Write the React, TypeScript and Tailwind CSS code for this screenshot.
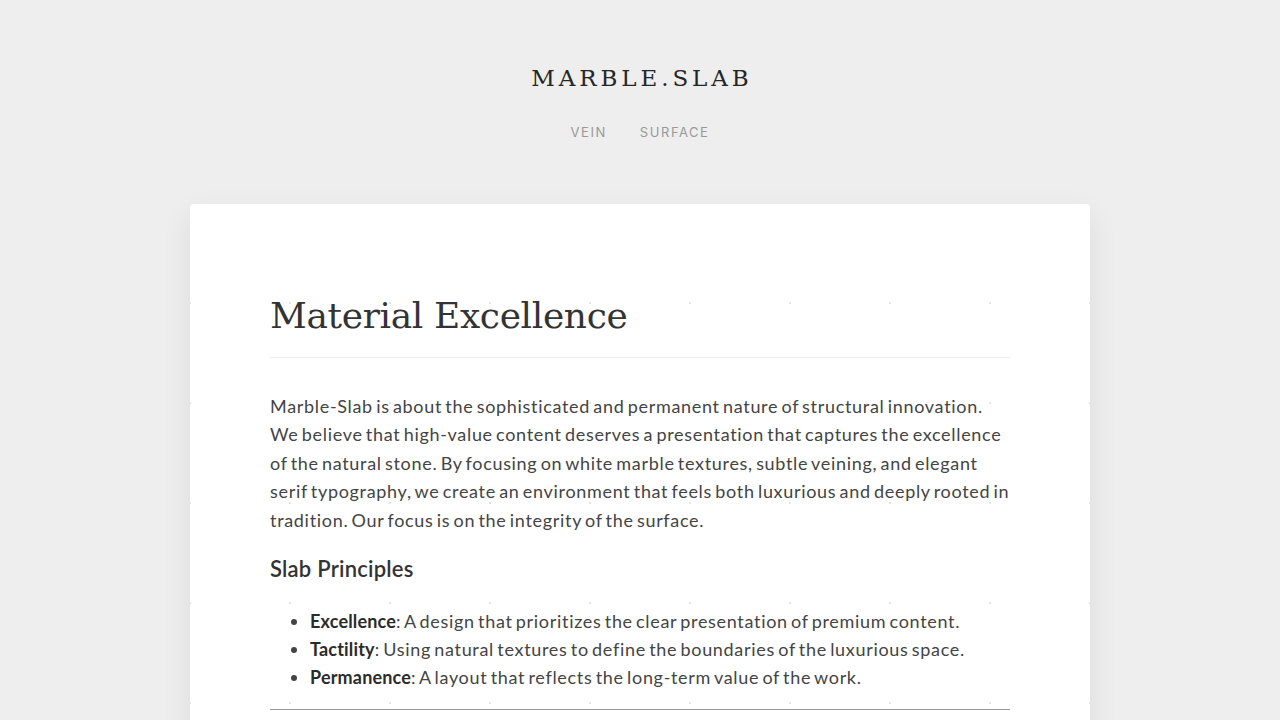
import React from 'react';

const principles = [
  { term: 'Excellence', text: 'A design that prioritizes the clear presentation of premium content.' },
  { term: 'Tactility', text: 'Using natural textures to define the boundaries of the luxurious space.' },
  { term: 'Permanence', text: 'A layout that reflects the long-term value of the work.' },
];

const App: React.FC = () => {
  return (
    <div className="min-h-screen bg-[#eeeeee] font-['Lato','Inter',sans-serif] text-[#333]">
      <header className="flex flex-col items-center pt-[62px]">
        <h1 className="pl-[0.17em] font-['DejaVu_Serif',serif] text-[23px] leading-8 tracking-[0.17em] text-[#262626]">
          MARBLE.SLAB
        </h1>
        <nav className="mt-[29px] flex gap-[33px] font-['Inter',sans-serif] text-[13px] tracking-[0.12em] text-[#999]">
          <a href="#">VEIN</a>
          <a href="#">SURFACE</a>
        </nav>
      </header>

      <main className="mx-auto mt-[61px] w-[900px] rounded bg-white bg-[radial-gradient(circle,#e4e4e4_1px,transparent_1.2px)] bg-[size:100px_100px] bg-[position:-50px_49px] px-20 pt-[85px] pb-10 shadow-[0_10px_30px_rgba(0,0,0,0.08)]">
        <h2 className="border-b border-[#ececec] pb-[14px] font-['DejaVu_Serif',serif] text-[36px] leading-[54px] tracking-[-0.01em] text-[#333]">
          Material Excellence
        </h2>
        <p className="mt-[34px] text-[18px] leading-[28.5px] tracking-[0.038em] [word-spacing:-2px] text-[#444]">
          Marble-Slab is about the sophisticated and permanent nature of structural innovation. We believe that high-value content deserves a presentation that captures the excellence of the natural stone. By focusing on white marble textures, subtle veining, and elegant serif typography, we create an environment that feels both luxurious and deeply rooted in tradition. Our focus is on the integrity of the surface.
        </p>
        <h3 className="mt-[19px] text-[22px] font-semibold leading-8 tracking-[0.01em] text-[#333]">Slab Principles</h3>
        <ul className="mt-[22px] list-disc pl-10 text-[18px] leading-[28px] tracking-[0.038em] [word-spacing:-2px] text-[#444]">
          {principles.map((p) => (
            <li key={p.term}>
              <strong className="font-bold tracking-[0.01em] text-[#2b2b2b]">{p.term}</strong>: {p.text}
            </li>
          ))}
        </ul>
        <hr className="mt-[18px] border-t border-[#999]" />
      </main>
    </div>
  );
};

export default App;
